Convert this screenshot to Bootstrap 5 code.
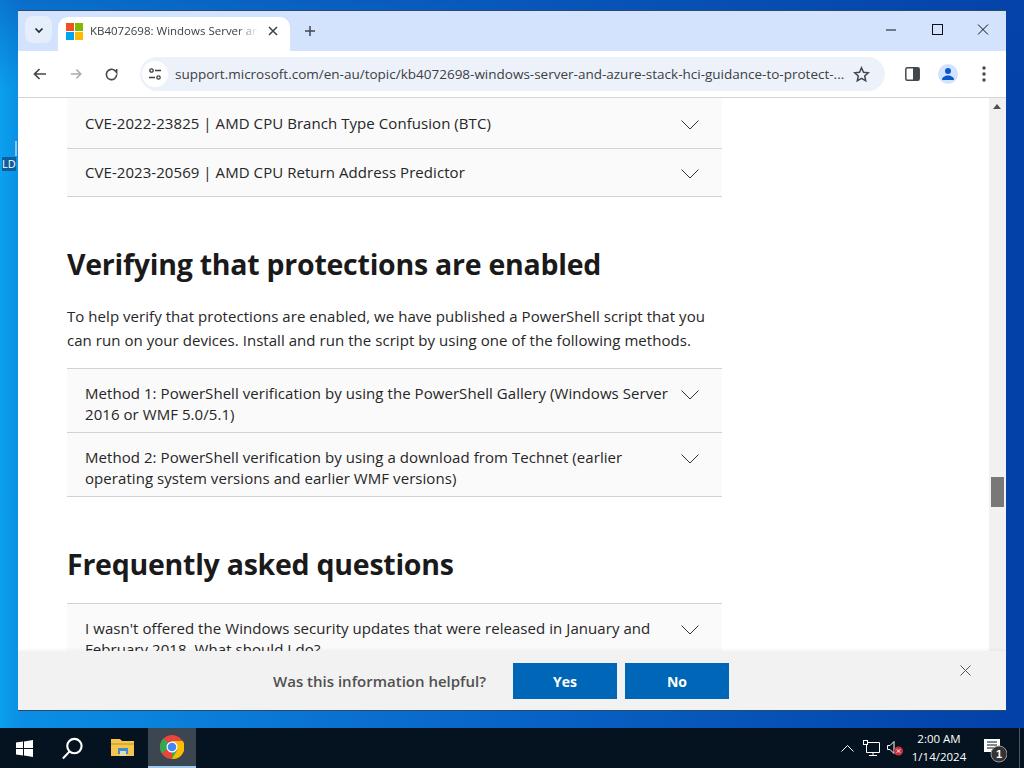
<!DOCTYPE html>
<html lang="en">
<head>
    <meta charset="UTF-8">
    <title>KB4072698</title>
    <link href="https://cdn.jsdelivr.net/npm/bootstrap@5.3.3/dist/css/bootstrap.min.css" rel="stylesheet">
    <style>
        html, body {
            height: 768px;
            overflow: hidden;
        }

        body {
            width: 1024px;
            font-family: "Open Sans", "Liberation Sans", sans-serif;
            background: #001a2c;
        }

        .desktop {
            height: 728px;
            padding: 10px 18px 17px 18px;
            background: linear-gradient(180deg, rgba(8, 70, 170, .45) 0, transparent 90px), linear-gradient(90deg, #0ba0ee 0%, #0a8fe4 2%, #0a6fd0 35%, #0340a8 100%);
            position: relative;
        }

        .desk-label {
            position: absolute;
            left: 2px;
            top: 157px;
            font-size: 11px;
            line-height: 14px;
            color: #fff;
            background: #0b5f9e;
        }

        .desk-tick {
            position: absolute;
            left: 15px;
            top: 141px;
            width: 2px;
            height: 15px;
            background: #8fc4e8;
        }

        .browser {
            height: 701px;
            background: #fff;
            border: 1px solid #2a4a6a;
            border-width: 1px 0 1px 0;
        }

        /* tab strip */
        .tabstrip {
            height: 40px;
            background: #d3e3fd;
            padding-left: 7px;
        }

        .tab-search {
            width: 27px;
            height: 27px;
            margin-top: 5px;
            border-radius: 8px;
            background: #e6eefc;
        }

        .tab-active {
            width: 232px;
            height: 34px;
            margin-left: 6px;
            margin-top: 6px;
            padding: 6px 12px 0 8px;
            background: #fff;
            border-radius: 10px 10px 0 0;
        }

        .tab-title {
            width: 168px;
            font-size: 11.5px;
            line-height: 16px;
            color: #3c4043;
            white-space: nowrap;
            margin-left: 7px;
            -webkit-mask-image: linear-gradient(90deg, #000 88%, transparent 100%);
            mask-image: linear-gradient(90deg, #000 88%, transparent 100%);
        }

        .tab-close {
            margin-top: 3px;
        }

        .tab-plus {
            margin-top: 14px;
            margin-left: 14px;
        }

        .win-btn {
            width: 46px;
            padding-top: 13px;
        }

        /* toolbar */
        .toolbar {
            height: 47px;
            background: #fff;
            border-bottom: 1px solid #d4d6d9;
            padding-left: 14px;
        }

        .tool-gap {
            margin-left: 21px;
        }

        .addr-pill {
            width: 745px;
            height: 34px;
            margin-left: 21px;
            background: #edf2fa;
            border-radius: 17px;
            padding-left: 2px;
        }

        .site-chip {
            width: 26px;
            height: 26px;
            border-radius: 50%;
            background: #fff;
            margin-right: 7px;
        }

        .addr-text {
            font-size: 13.5px;
            color: #3c4043;
            white-space: nowrap;
        }

        .addr-star {
            margin-left: 9px;
        }

        .side-icon {
            margin-left: 20px;
        }

        .avatar {
            width: 20px;
            height: 20px;
            margin-left: 18px;
            background: #d3e3fd;
        }

        .dots-icon {
            margin-left: 24px;
        }

        /* page */
        .viewport {
            height: 612px;
            position: relative;
            overflow: hidden;
        }

        .page-col {
            width: 971px;
            height: 612px;
            padding-left: 49px;
            overflow: hidden;
        }

        .sb-track {
            width: 17px;
            height: 612px;
            background: #f1f1f1;
            position: relative;
        }

        .sb-thumb {
            position: absolute;
            left: 2px;
            top: 379px;
            width: 13px;
            height: 30px;
            background: #787878;
        }

        .sb-up, .sb-down {
            position: absolute;
            left: 4px;
            width: 0;
            height: 0;
            border-left: 4px solid transparent;
            border-right: 4px solid transparent;
        }

        .sb-up {
            top: 6px;
            border-bottom: 5px solid #505050;
        }

        .sb-down {
            bottom: 7px;
            border-top: 5px solid #505050;
        }

        .acc-list {
            width: 655px;
            color: #262626;
        }

        .acc-row {
            display: flex;
            justify-content: space-between;
            background: #fafafa;
            border-bottom: 1px solid #d2d2d2;
            padding: 14px 23px 0 18px;
            font-size: 15px;
            line-height: 21px;
            letter-spacing: .06px;
        }

        .acc-row svg {
            flex: none;
            margin-top: 7px;
        }

        .acc-top {
            border-top: 1px solid #d2d2d2;
        }

        .acc-single {
            align-items: center;
            padding-top: 1px;
        }

        .acc-single svg {
            margin-top: 2px;
        }

        .acc-h51 {
            height: 51px;
        }

        .acc-h48 {
            height: 48px;
            padding-top: 0;
        }

        .acc-h65 {
            height: 65px;
        }

        .acc-h64 {
            height: 64px;
        }

        .acc-text {
            width: 590px;
        }

        .kb-h {
            font-size: 28.5px;
            line-height: 40px;
            font-weight: 700;
            letter-spacing: -.25px;
            color: #1a1a1a;
            margin: 0;
        }

        .kb-h-first {
            margin-top: 47px;
        }

        .kb-h-second {
            margin-top: 47px;
        }

        .kb-p {
            width: 655px;
            margin: 20px 0 0 0;
            font-size: 15px;
            line-height: 24px;
            letter-spacing: .05px;
            color: #262626;
        }

        .list-after-p {
            margin-top: 16px;
        }

        .list-after-h {
            margin-top: 19px;
        }

        /* feedback bar lies over the page */
        .feedback {
            position: absolute;
            left: 0;
            right: 0;
            bottom: 0;
            height: 59px;
            background: #f2f2f2;
            box-shadow: 0 -1px 4px rgba(0, 0, 0, .05);
            padding-left: 255px;
            padding-top: 12px;
        }

        .fb-q {
            width: 240px;
            font-size: 15px;
            line-height: 36px;
            color: #505050;
            font-weight: 600;
            white-space: nowrap;
        }

        .fb-btn {
            width: 104px;
            height: 36px;
            margin-right: 8px;
            background: #0067b8;
            border: 0;
            border-radius: 0;
            color: #fff;
            font-size: 14px;
            font-weight: 700;
            padding: 0;
        }

        .fb-close {
            position: absolute;
            left: 942px;
            top: 14px;
            line-height: 0;
        }

        /* taskbar */
        .taskbar {
            height: 40px;
            background: #04131f;
            color: #fff;
        }

        .task-slot {
            width: 48px;
            height: 40px;
        }

        .task-wide {
            width: 52px;
        }

        .task-on {
            background: #3b4650;
            border-bottom: 2px solid #9fc9ee;
        }

        .tray-net {
            margin-left: 9px;
        }

        .tray-vol {
            margin-left: 7px;
        }

        .task-clock {
            width: 66px;
            margin-left: 2px;
            font-size: 11.5px;
            line-height: 18px;
            text-align: center;
        }

        .tray-note {
            margin-left: 12px;
            margin-right: 12px;
            margin-top: 6px;
            line-height: 0;
        }

        .show-desk {
            width: 1px;
            height: 40px;
            margin-right: 4px;
            background: #4a5560;
        }
    </style>
</head>
<body>
    <div class="desktop">
        <div class="desk-tick"></div>
        <div class="desk-label">LD</div>
        <div class="browser d-flex flex-column">

            <!-- Tab strip -->
            <div class="tabstrip d-flex align-items-start">
                <div class="tab-search d-flex align-items-center justify-content-center">
                    <svg width="12" height="12" viewBox="0 0 12 12"><path d="M2.500 4.500 6 8l3.500-3.500" fill="none" stroke="#1f2937" stroke-width="1.700"/></svg>
                </div>
                <div class="tab-active d-flex">
                    <svg class="flex-shrink-0" width="17" height="17" viewBox="0 0 17 17">
                        <rect width="8" height="8" fill="#f25022"/>
                        <rect x="9" width="8" height="8" fill="#7fba00"/>
                        <rect y="9" width="8" height="8" fill="#00a4ef"/>
                        <rect x="9" y="9" width="8" height="8" fill="#ffb900"/>
                    </svg>
                    <div class="tab-title">KB4072698: Windows Server an</div>
                    <svg class="tab-close ms-auto" width="10" height="10" viewBox="0 0 10 10"><path d="M1 1l8 8M9 1l-8 8" stroke="#3c4043" stroke-width="1.500"/></svg>
                </div>
                <svg class="tab-plus" width="12" height="12" viewBox="0 0 12 12"><path d="M6 1v10M1 6h10" stroke="#44474c" stroke-width="1.500"/></svg>
                <div class="ms-auto d-flex">
                    <div class="win-btn d-flex justify-content-center"><svg width="12" height="12" viewBox="0 0 12 12"><path d="M1 6h10" stroke="#111" stroke-width="1"/></svg></div>
                    <div class="win-btn d-flex justify-content-center"><svg width="12" height="12" viewBox="0 0 12 12"><rect x="1.500" y=".5" width="10" height="10" fill="none" stroke="#111"/></svg></div>
                    <div class="win-btn d-flex justify-content-center"><svg width="12" height="12" viewBox="0 0 12 12"><path d="M1 .5l10 10M11 .5l-10 10" stroke="#111"/></svg></div>
                </div>
            </div>

            <!-- Toolbar -->
            <div class="toolbar d-flex align-items-center">
                <svg width="16" height="16" viewBox="0 0 16 16"><path d="M14 8H3M7.500 3 2.500 8l5 5" fill="none" stroke="#44474c" stroke-width="1.700"/></svg>
                <svg class="tool-gap" width="14" height="14" viewBox="0 0 16 16"><path d="M2 8h11M8.500 3l5 5-5 5" fill="none" stroke="#a9abae" stroke-width="1.700"/></svg>
                <svg class="tool-gap" width="15" height="15" viewBox="0 0 16 16"><path d="M13.500 8a5.500 5.500 0 1 1-1.600-3.900L13.500 6V2" fill="none" stroke="#44474c" stroke-width="1.700"/></svg>
                <div class="addr-pill d-flex align-items-center">
                    <div class="site-chip d-flex align-items-center justify-content-center">
                        <svg width="14" height="14" viewBox="0 0 14 14" fill="none" stroke="#3c4043" stroke-width="1.300"><circle cx="3.500" cy="3.500" r="1.700"/><path d="M7 3.500h6M1 10.500h6"/><circle cx="10.500" cy="10.500" r="1.700"/></svg>
                    </div>
                    <div class="addr-text">support.microsoft.com/en-au/topic/kb4072698-windows-server-and-azure-stack-hci-guidance-to-protect-...</div>
                    <svg class="addr-star flex-shrink-0" width="17" height="17" viewBox="0 0 17 17"><path d="M8.500 1.800l2 4.500 4.800.5-3.600 3.200 1 4.800-4.200-2.500-4.200 2.500 1-4.800L1.700 6.800l4.800-.5z" fill="none" stroke="#44474c" stroke-width="1.500"/></svg>
                </div>
                <svg class="side-icon" width="15" height="14" viewBox="0 0 15 14"><rect x=".8" y=".8" width="13.400" height="12.400" rx="1.500" fill="none" stroke="#44474c" stroke-width="1.500"/><rect x="8" y="1" width="6" height="12" fill="#44474c"/></svg>
                <div class="avatar d-flex align-items-center justify-content-center rounded-circle">
                    <svg width="14" height="14" viewBox="0 0 14 14" fill="#0b57d0"><circle cx="7" cy="4" r="3"/><path d="M1 13c0-3 3-4.500 6-4.500s6 1.500 6 4.500z"/></svg>
                </div>
                <svg class="dots-icon" width="4" height="16" viewBox="0 0 4 16" fill="#44474c"><circle cx="2" cy="2" r="1.700"/><circle cx="2" cy="8" r="1.700"/><circle cx="2" cy="14" r="1.700"/></svg>
            </div>

            <!-- Page -->
            <div class="viewport d-flex">
                <div class="page-col">
                    <div class="acc-list">
                        <div class="acc-row acc-single acc-h51">
                            <span>CVE-2022-23825 | AMD CPU Branch Type Confusion (BTC)</span>
                            <svg width="18" height="10" viewBox="0 0 18 10"><path d="M.5.5 9 9 17.500.5" fill="none" stroke="#333"/></svg>
                        </div>
                        <div class="acc-row acc-single acc-h48">
                            <span>CVE-2023-20569 | AMD CPU Return Address Predictor</span>
                            <svg width="18" height="10" viewBox="0 0 18 10"><path d="M.5.5 9 9 17.500.5" fill="none" stroke="#333"/></svg>
                        </div>
                    </div>

                    <h2 class="kb-h kb-h-first">Verifying that protections are enabled</h2>
                    <p class="kb-p">To help verify that protections are enabled, we have published a PowerShell script that you can run on your devices. Install and run the script by using one of the following methods.</p>

                    <div class="acc-list list-after-p">
                        <div class="acc-row acc-top acc-h65">
                            <span class="acc-text">Method 1: PowerShell verification by using the PowerShell Gallery (Windows Server 2016 or WMF 5.0/5.1)</span>
                            <svg width="18" height="10" viewBox="0 0 18 10"><path d="M.5.5 9 9 17.500.5" fill="none" stroke="#333"/></svg>
                        </div>
                        <div class="acc-row acc-h64">
                            <span class="acc-text">Method 2: PowerShell verification by using a download from Technet (earlier operating system versions and earlier WMF versions)</span>
                            <svg width="18" height="10" viewBox="0 0 18 10"><path d="M.5.5 9 9 17.500.5" fill="none" stroke="#333"/></svg>
                        </div>
                    </div>

                    <h2 class="kb-h kb-h-second">Frequently asked questions</h2>

                    <div class="acc-list list-after-h">
                        <div class="acc-row acc-top acc-h64">
                            <span class="acc-text">I wasn't offered the Windows security updates that were released in January and February 2018. What should I do?</span>
                            <svg width="18" height="10" viewBox="0 0 18 10"><path d="M.5.5 9 9 17.500.5" fill="none" stroke="#333"/></svg>
                        </div>
                    </div>
                </div>
                <div class="sb-track">
                    <div class="sb-up"></div>
                    <div class="sb-thumb"></div>
                    <div class="sb-down"></div>
                </div>
                <div class="feedback d-flex">
                    <div class="fb-q">Was this information helpful?</div>
                    <button class="fb-btn">Yes</button>
                    <button class="fb-btn">No</button>
                    <div class="fb-close"><svg width="11" height="11" viewBox="0 0 11 11"><path d="M.5.5l10 10M10.500.5l-10 10" stroke="#555"/></svg></div>
                </div>
            </div>
        </div>
    </div>

    <!-- Taskbar -->
    <div class="taskbar d-flex align-items-center">
        <div class="task-slot d-flex align-items-center justify-content-center">
            <svg width="17" height="17" viewBox="0 0 17 17" fill="#fff"><path d="M0 2.500 7 1.500v6.500H0zM8 1.400 17 0v8H8zM0 9h7v6.500L0 14.500zM8 9h9v8L8 15.600z"/></svg>
        </div>
        <div class="task-slot d-flex align-items-center justify-content-center">
            <svg width="23" height="23" viewBox="0 0 24 24" fill="none" stroke="#fff" stroke-width="2.200"><circle cx="14" cy="9.500" r="7.500"/><path d="M9 15 2 22.500"/></svg>
        </div>
        <div class="task-slot task-wide d-flex align-items-center justify-content-center">
            <svg width="23" height="20" viewBox="0 0 23 20"><path d="M0 1h9l2 2h12v15H0z" fill="#f3c64f"/><rect y="5" width="23" height="2" fill="#e0a92f"/><rect x="7" y="10" width="10" height="6" fill="#3f8fd0"/><rect x="9" y="13" width="6" height="5" fill="#e7d9a8"/></svg>
        </div>
        <div class="task-slot task-on d-flex align-items-center justify-content-center">
            <svg width="24" height="24" viewBox="0 0 24 24">
                <circle cx="12" cy="12" r="12" fill="#e8453c"/>
                <path d="M12 12 1.600 18A12 12 0 0 1 3.500 3.500L12 12z" fill="#34a853"/>
                <path d="M12 12 22.400 18A12 12 0 0 1 12 24z" fill="#34a853"/>
                <path d="M12 6h10.900A12 12 0 0 1 12 24l5.200-9z" fill="#fbbc04"/>
                <circle cx="12" cy="12" r="5.500" fill="#fff"/>
                <circle cx="12" cy="12" r="4.300" fill="#4285f4"/>
            </svg>
        </div>
        <div class="d-flex align-items-center ms-auto">
            <svg width="13" height="8" viewBox="0 0 13 8"><path d="M.5 7.500 6.500 1.500l6 6" fill="none" stroke="#fff"/></svg>
            <svg class="tray-net" width="17" height="16" viewBox="0 0 17 16" fill="none" stroke="#fff"><path d="M3.500 2.500h13v10h-13zM10 12.500v3M6 15.500h8"/><rect x=".5" y=".5" width="4" height="4" fill="#04131f"/></svg>
            <svg class="tray-vol" width="17" height="16" viewBox="0 0 17 16"><path d="M.5 5.500h2.500l4-4v12l-4-4H.5z" fill="none" stroke="#fff"/><circle cx="11.500" cy="11" r="4.500" fill="#c8333d"/><path d="M9.800 9.300l3.400 3.400M13.200 9.300l-3.400 3.400" stroke="#fff"/></svg>
            <div class="task-clock">2:00 AM<br>1/14/2024</div>
            <div class="tray-note">
                <svg width="23" height="24" viewBox="0 0 23 24"><path d="M0 0h16v13h-5l-3 3v-3H0z" fill="#fff"/><path d="M3 3h10M3 6h10M3 9h10" stroke="#04131f"/><circle cx="15" cy="15" r="8" fill="#333" stroke="#999"/><text x="15" y="19" text-anchor="middle" font-size="11" font-family="Liberation Sans" font-weight="700" fill="#fff">1</text></svg>
            </div>
            <div class="show-desk"></div>
        </div>
    </div>
</body>
</html>
